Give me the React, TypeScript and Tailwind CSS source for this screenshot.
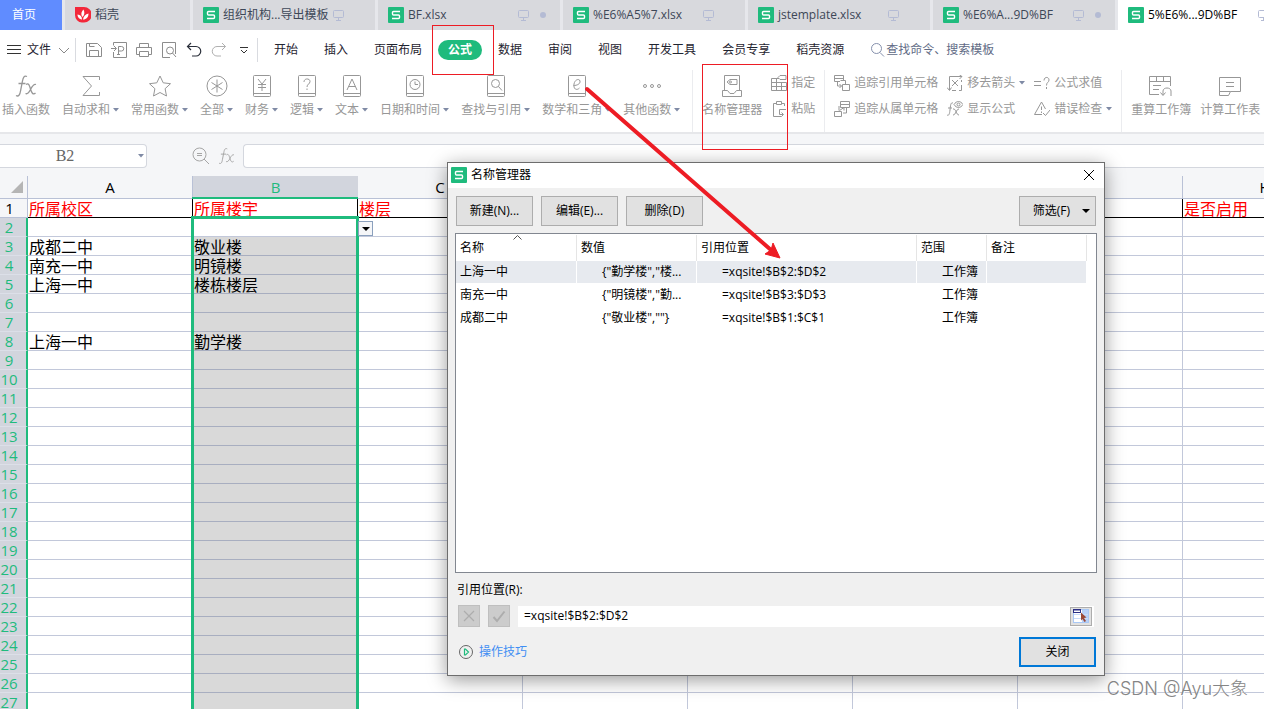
import type { ReactNode } from 'react'

// ── Data ───────────────────────────────────────────────────
const tabs = [
  { title: '组织机构...导出模板' },
  { title: 'BF.xlsx', dirty: true },
  { title: '%E6%A5%7.xlsx' },
  { title: 'jstemplate.xlsx' },
  { title: '%E6%A...9D%BF', dirty: true },
  { title: '5%E6%...9D%BF', active: true },
]

const menuLeft = ['开始', '插入', '页面布局']
const menuRight = ['数据', '审阅', '视图', '开发工具', '会员专享', '稻壳资源']

const columns = ['A', 'B', 'C', 'D', 'E', 'F', 'G', 'H']

const cells: Record<string, string> = {
  A1: '所属校区', B1: '所属楼宇', C1: '楼层', H1: '是否启用',
  A3: '成都二中', B3: '敬业楼',
  A4: '南充一中', B4: '明镜楼',
  A5: '上海一中', B5: '楼栋楼层',
  A8: '上海一中', B8: '勤学楼',
}

const rowNumbers = Array.from({ length: 27 }, (_, i) => i + 1)

const names = [
  { name: '上海一中', value: '{"勤学楼","楼...', ref: '=xqsite!$B$2:$D$2', scope: '工作簿' },
  { name: '南充一中', value: '{"明镜楼","勤...', ref: '=xqsite!$B$3:$D$3', scope: '工作簿' },
  { name: '成都二中', value: '{"敬业楼",""}', ref: '=xqsite!$B$1:$C$1', scope: '工作簿' },
]

// ── Icons ──────────────────────────────────────────────────
function Icon({ w = 16, h = 16, className, children }: { w?: number; h?: number; className?: string; children: ReactNode }) {
  return (
    <svg
      width={w}
      height={h}
      viewBox={`0 0 ${w} ${h}`}
      fill="none"
      stroke="currentColor"
      strokeWidth="1"
      className={`shrink-0 ${className ?? ''}`}
      aria-hidden="true"
    >
      {children}
    </svg>
  )
}

function SheetLogo() {
  return (
    <Icon>
      <rect width="16" height="16" rx="1" fill="#1fbb7d" stroke="none" />
      <path d="M12 4.5H5.5Q4.5 4.5 4.5 5.5V7Q4.5 8 5.5 8H10.5Q11.5 8 11.5 9V10.5Q11.5 11.5 10.5 11.5H4" stroke="#fff" strokeWidth="1.4" />
    </Icon>
  )
}

function Monitor() {
  return (
    <Icon w={12} h={12} className="text-[#b4bbd4]">
      <rect x="0.5" y="1.5" width="10" height="7" rx="1" />
      <path d="M5.5 8.5v3M3 11.5h5" />
    </Icon>
  )
}

function Caret({ className = 'text-[#7f8aa5]' }: { className?: string }) {
  return (
    <Icon w={6} h={4} className={className}>
      <path d="M0 0h6L3 3.5z" fill="currentColor" stroke="none" />
    </Icon>
  )
}

// Framed "book" used by the function categories
function Book({ children }: { children?: ReactNode }) {
  return (
    <Icon w={20} h={24}>
      <rect x="1.5" y="1.5" width="17" height="21" rx="1" />
      <path d="M1.5 19.5h17" />
      {children}
    </Icon>
  )
}

function FxIcon({ w = 22, h = 24 }: { w?: number; h?: number }) {
  return (
    <svg width={w} height={h} viewBox="0 0 22 24" fill="none" stroke="currentColor" strokeWidth="1.3" className="shrink-0" aria-hidden="true">
      <path d="M12 2.5C9 1 8 4 7.500 7L5.500 17C5 21 3.500 23 1 21.500M3.500 9.500h7" />
      <path d="M11 10.500c2.500-2 3.500 1 4.500 4.500s2.500 6.500 5 4M21 10.500c-2.500-1-4.500 3-5.500 5s-3 5-5 4" />
    </svg>
  )
}

// ── Ribbon pieces ──────────────────────────────────────────
function BigTool({ icon, label, menu = false }: { icon: ReactNode; label: string; menu?: boolean }) {
  return (
    <button className="flex shrink-0 flex-col items-center gap-1">
      {icon}
      <span className="flex items-center gap-[3px] whitespace-nowrap">
        {label}
        {menu && <Caret />}
      </span>
    </button>
  )
}

function SmallTool({ icon, label, menu = false }: { icon: ReactNode; label: string; menu?: boolean }) {
  return (
    <button className="flex h-[18px] items-center gap-1 whitespace-nowrap">
      {icon}
      {label}
      {menu && <Caret />}
    </button>
  )
}

function ToolPair({ children }: { children: ReactNode }) {
  return <div className="flex shrink-0 flex-col gap-2">{children}</div>
}

function Divider() {
  return <div className="-mt-1 w-px shrink-0 self-stretch bg-[#ebecef]" />
}

function TabStrip() {
  return (
    <nav className="flex h-[30px] shrink-0 gap-[3px] overflow-hidden bg-[#e6e7eb] text-[#3d4757]">
      <button className="w-[62px] shrink-0 bg-[#608cff] pr-3.5 text-white">首页</button>
      <button className="flex w-[125px] shrink-0 items-center gap-1 bg-[#d8d9dd] px-2.5">
        <Icon>
          <path d="M0 0H9A7.500 7.500 0 0 1 9 15.500H7A7.500 7.500 0 0 1 0 8z" fill="#f3283a" stroke="none" />
          <path d="M7 12.500C3.500 12 2.500 9.500 2.500 7.500 5.500 8 7 9.500 7 12.500zM7.500 10C5.500 7.500 6.500 4.500 8.500 2.500 10 5.500 9.500 8 7.500 10zM8 12.500C8.500 9 10.500 7 13.500 6.500 13.500 10 11.500 12.500 8 12.500z" fill="#fff" stroke="none" />
        </Icon>
        稻壳
      </button>
      {tabs.map(({ title, dirty, active }) => (
        <button
          key={title}
          className={`flex w-[182px] shrink-0 items-center gap-1 pl-2.5 ${active ? 'bg-white text-black' : 'bg-[#d8d9dd]'}`}
        >
          <SheetLogo />
          <span className="w-[106px] whitespace-nowrap text-left">{title}</span>
          <Monitor />
          {dirty && <span className="ml-1.5 size-1.5 rounded-full bg-[#b4bbd4]" />}
        </button>
      ))}
    </nav>
  )
}

function MenuBar() {
  return (
    <div className="flex h-[38px] shrink-0 items-center overflow-hidden pt-px whitespace-nowrap text-[#1f2430]">
      <button className="flex items-center gap-1.5 pl-[7px]">
        <Icon w={14} className="text-[#333]">
          <path d="M0 3.500h14M0 7.500h14M0 11.500h14" />
        </Icon>
        文件
        <Icon w={18} className="text-[#888]">
          <path d="M2 6l5 5 5-5" />
        </Icon>
      </button>
      <div className="h-6 w-px bg-[#d9dbe0]" />
      <div className="flex items-center gap-[9px] pr-[5px] pl-2.5 text-[#8c8c8c]">
        <button aria-label="保存">
          <Icon>
            <path d="M.5 1.500h11l4 4v9H.5zM3.500 14.500v-6h9v6M3.500 1.500v3h5" />
          </Icon>
        </button>
        <button aria-label="输出为PDF">
          <Icon>
            <path d="M2.500 3.500v-3h13v15h-13V10M0 6.500h5M3 4l2.500 2.500L3 9M7.500 12V4.500h3a2 2 0 0 1 0 4.500h-3M6 12.500h3" />
          </Icon>
        </button>
        <button aria-label="打印">
          <Icon>
            <path d="M3.500 5V1.500h9V5M3.500 12.500h-3v-7h15v7h-3M3.500 9.500h9v5h-9z" />
          </Icon>
        </button>
        <button aria-label="打印预览">
          <Icon>
            <path d="M9 15.500H1.500V.5h13V12" />
            <circle cx="9" cy="8.500" r="3.500" />
            <path d="M11.500 11l3.500 4" />
          </Icon>
        </button>
        <button aria-label="撤销" className="text-[#2a2f3a]">
          <Icon>
            <path d="M5 1L1.500 4.500 5 8M1.500 4.500H10a4.500 4.500 0 0 1 0 9.500H6" strokeWidth="1.200" />
          </Icon>
        </button>
        <button aria-label="恢复" className="text-[#b0b0b0]">
          <Icon>
            <path d="M11 1l3.500 3.500L11 8M14.500 4.500H6A4.500 4.500 0 0 0 6 14h4" />
          </Icon>
        </button>
        <button aria-label="自定义快速访问工具栏" className="text-[#333]">
          <Icon>
            <path d="M4 5.500h8M5 8l3 3 3-3" />
          </Icon>
        </button>
      </div>
      <div className="h-6 w-px bg-[#d9dbe0]" />
      <div className="flex items-center gap-[26px] pl-4">
        {menuLeft.map((m) => (
          <button key={m}>{m}</button>
        ))}
      </div>
      <button className="mx-4 h-5 w-11 rounded-full bg-[#1fbb7d] font-bold text-white">公式</button>
      <div className="flex items-center gap-[26px]">
        {menuRight.map((m) => (
          <button key={m}>{m}</button>
        ))}
        <button className="flex items-center text-[#5f6b85]">
          <Icon className="text-[#8590ac]">
            <circle cx="6.500" cy="6.500" r="5" />
            <path d="M10 10.500l4 4" />
          </Icon>
          查找命令、搜索模板
        </button>
      </div>
    </div>
  )
}

function Ribbon() {
  return (
    <div className="flex h-16 shrink-0 gap-3 overflow-hidden pt-1.5 pl-0.5 text-[#979797]">
      <BigTool icon={<FxIcon />} label="插入函数" />
      <BigTool
        icon={<Icon w={20} h={24}><path d="M18.500 6V2.500H2l8.500 9.500L2 21.500h16.500V18" /></Icon>}
        label="自动求和"
        menu
      />
      <BigTool
        icon={<Icon w={24} h={24}><path d="M12 2l3.200 6.800 7.300.9-5.400 5 1.400 7.300L12 18.500 5.500 22l1.400-7.300-5.400-5 7.300-.9z" /></Icon>}
        label="常用函数"
        menu
      />
      <BigTool
        icon={<Icon w={22} h={24}><circle cx="11" cy="12" r="10" /><path d="M11 5.500v13M5.500 8.500l11 7M5.500 15.500l11-7" /></Icon>}
        label="全部"
        menu
      />
      <BigTool icon={<Book><path d="M6 5l4 5 4-5M10 10v7M6 10.500h8M6 13.500h8" /></Book>} label="财务" menu />
      <BigTool icon={<Book><path d="M7 8c0-4 6-4 6-.5 0 2.500-3 2.500-3 5.500M10 14.500V16" /></Book>} label="逻辑" menu />
      <BigTool icon={<Book><path d="M5 16l5-11 5 11M6.500 12.500h7" /></Book>} label="文本" menu />
      <BigTool icon={<Book><circle cx="10" cy="10.500" r="5" /><path d="M10 7.500v3h3" /></Book>} label="日期和时间" menu />
      <BigTool icon={<Book><circle cx="9.500" cy="9.500" r="4" /><path d="M12.500 12.500l3.500 4" /></Book>} label="查找与引用" menu />
      <BigTool icon={<Book><path d="M6.500 11.500C10 11.500 13.500 10 13 7c-.5-2.500-5-2-6 3-.8 5 2.500 7 5.500 4" /></Book>} label="数学和三角" menu />
      <BigTool
        icon={<Icon w={20} h={24}><circle cx="3" cy="12" r="1.500" /><circle cx="10" cy="12" r="1.500" /><circle cx="17" cy="12" r="1.500" /></Icon>}
        label="其他函数"
        menu
      />
      <div className="flex shrink-0 gap-[9px]">
        <Divider />
        <BigTool
          icon={
            <Icon w={20} h={24}>
              <path d="M2.500 16.500v-15h15v15M.5 16.500h5l2.500 3h4l2.500-3h5v6H.5zM8 5.500h7v5H8L5 8z" />
              <circle cx="8.500" cy="8" r="1" />
            </Icon>
          }
          label="名称管理器"
        />
        <ToolPair>
          <SmallTool
            icon={<Icon><path d="M8 3.500H.5v12h15v-8M.5 7.500h15M.5 11.500h15M5.500 3.500v12M10.500 7.500v8M9 .5h6v4H9l-2-2z" /></Icon>}
            label="指定"
          />
          <SmallTool
            icon={<Icon><path d="M5 2.500H2.500v13h8M11 2.500h2.500V5M5.500.5h5v3h-5zM15 8.500H8.500v5H12M10.500 11.500l2 2-2 2" /></Icon>}
            label="粘贴"
          />
        </ToolPair>
        <Divider />
        <ToolPair>
          <SmallTool
            icon={<Icon><path d="M9.500 5V.5h-9v6H6M.5 3.500h9M3.500 6.500V11h4M5.500 9L7.500 11l-2 2M6.500 5.500h5v4M8.500 9.500h7v6h-7z" /></Icon>}
            label="追踪引用单元格"
          />
          <SmallTool
            icon={<Icon><path d="M6.500.500h9v6h-9zM6.500 3.500h9M.5 10.500h7v5h-7zM12.500 6.500V12H9M5 9.500V5M5.500 9.500L10 6.500M7 6.500h3v3" /></Icon>}
            label="追踪从属单元格"
          />
        </ToolPair>
        <ToolPair>
          <SmallTool
            icon={<Icon><path d="M2.500 15V1.500H15M12.500 0L15 1.500 12.500 4M0 12.500l2.500 3 2-3M5 5l6 6M11 5l-6 6M14.500 5v2M14.500 10v5.500H12M5 15.500h4" /></Icon>}
            label="移去箭头"
            menu
          />
          <SmallTool
            icon={<Icon><path d="M6 2C3.500 1 3.500 5 3 9s-1 6-3 5M1 7h4M6 8c3-1 3 6 6 6M12 8c-3 0-3 6-6 6M7 3.500c2.500-4 6.500-4 9 0-2.500 4-6.500 4-9 0z" /><circle cx="11.500" cy="3.500" r="1.500" /></Icon>}
            label="显示公式"
          />
        </ToolPair>
        <ToolPair>
          <SmallTool
            icon={<Icon><path d="M0 6.500h7M0 10.500h7M10 5.500c0-4 5-4 5-.5 0 2.500-2.500 2-2.500 5.500M12.500 12v2" /></Icon>}
            label="公式求值"
          />
          <SmallTool
            icon={<Icon><path d="M8 13.500H.5L7.500 1l4 7M7.500 5.500V9M7.500 10.500V12M9 12l2.500 2.500L16 9" /></Icon>}
            label="错误检查"
            menu
          />
        </ToolPair>
        <Divider />
        <BigTool
          icon={<Icon w={24} h={24}><path d="M10 20.500H.5v-18h21V12M.5 7.500h21M7.500 2.500v5M14.500 2.500v5M4 11.500h8M4 15.500h6M14 21v-4c0-4 8-4 8 0v5M11.500 18.500l2.500 3 2.500-3" /></Icon>}
          label="重算工作簿"
        />
        <BigTool
          icon={<Icon w={24} h={24}><path d="M1.500 3.500h21v14h-10l-2 4h-9zM1.500 17.500h11M8 8.500h8M8 12.500h8" /></Icon>}
          label="计算工作表"
        />
      </div>
    </div>
  )
}

function FormulaBar() {
  return (
    <div className="flex h-11 shrink-0 items-center border-t-2 border-[#e6e7ea] bg-[#f5f6f8] pt-0.5">
      <div className="flex h-6 w-[147px] shrink-0 items-center rounded-r-sm border border-l-0 border-[#d4d7de] bg-white pr-0.5">
        <input
          aria-label="名称框"
          defaultValue="B2"
          className="w-full min-w-0 bg-transparent pr-2 text-center font-['Liberation_Serif',serif] text-base text-[#666] outline-none"
        />
        <button aria-label="展开名称框">
          <Caret />
        </button>
      </div>
      <div className="flex w-24 shrink-0 items-center justify-end gap-2 pr-2 text-[#a6a6a6]">
        <Icon w={18} h={18}>
          <circle cx="7.500" cy="7.500" r="6.500" />
          <path d="M12 12l5 5M5 6.500h5M5 8.500h5" />
        </Icon>
        <FxIcon w={17} h={18} />
      </div>
      <input
        aria-label="编辑栏"
        className="h-6 min-w-0 flex-1 rounded-l-sm border border-r-0 border-[#d4d7de] bg-white outline-none"
      />
    </div>
  )
}

// ── Worksheet ──────────────────────────────────────────────
function cellClass(col: string, row: number) {
  if (row === 1) return 'border-black bg-white text-[#f00]'
  if (col === 'B') return row === 2 ? 'border-[#c2c8da] bg-white' : 'border-[#a8aec0] bg-[#d9d9d9]'
  return 'border-[#c2c8da] bg-white'
}

function Sheet() {
  return (
    <div className="relative min-h-0 flex-1 overflow-hidden">
      <table className="w-[1348px] table-fixed border-separate border-spacing-0">
        <colgroup>
          <col className="w-7" />
          {columns.map((c) => (
            <col key={c} className="w-[165px]" />
          ))}
        </colgroup>
        <thead>
          <tr className="h-[23px] text-[15px] leading-[22px]">
            <th className="border-r border-b border-[#b9c1d6] bg-[#f5f6f8] p-0">
              <Icon w={14} h={14} className="ml-2.5 text-[#b5b5b5]">
                <path d="M13 1v12H1z" fill="currentColor" stroke="none" />
              </Icon>
            </th>
            {columns.map((c) => (
              <th
                key={c}
                className={`border-b p-0 font-normal ${
                  c === 'B' ? 'border-[#1fbb7d] bg-[#d2d5dd] text-[#1fbb7d]' : 'border-r border-[#b9c1d6] bg-[#f5f6f8]'
                }`}
              >
                {c}
              </th>
            ))}
          </tr>
        </thead>
        <tbody>
          {rowNumbers.map((n) => (
            <tr key={n} className="h-[19px] leading-[18px]">
              <th
                className={`border-b p-0 pr-2 text-[15px] font-normal ${
                  n === 1
                    ? 'border-r border-r-[#b9c1d6] border-b-[#b9c1d6] bg-[#f5f6f8]'
                    : 'border-r-2 border-r-[#1fbb7d] border-b-[#dcdfe8] bg-[#d2d5dd] text-[#1fbb7d]'
                }`}
              >
                {n}
              </th>
              {columns.map((c) => (
                <td
                  key={c}
                  className={`border-r border-b p-0 pt-0.5 pl-px text-base leading-4 whitespace-nowrap ${cellClass(c, n)}`}
                >
                  {cells[c + n]}
                </td>
              ))}
            </tr>
          ))}
        </tbody>
      </table>

      {/* Column B selection frame */}
      <div className="pointer-events-none absolute top-[21px] left-[192px] h-0.5 w-[166px] bg-[#1fbb7d]" />
      <div className="pointer-events-none absolute top-10 -bottom-1 left-[191px] w-[168px] border-[3px] border-[#1fbb7d]" />

      {/* Validation drop-down of the active cell */}
      <button
        aria-label="下拉列表"
        className="absolute top-[45px] left-[358px] flex size-[15px] items-center justify-center border border-[#8ba0bd] bg-[#f5f6f8]"
      >
        <Icon w={8} h={4} className="text-black">
          <path d="M0 0h8L4 4z" fill="currentColor" stroke="none" />
        </Icon>
      </button>
    </div>
  )
}

// ── Name manager dialog ────────────────────────────────────
function DialogButton({ children, className = '' }: { children: ReactNode; className?: string }) {
  return (
    <button className={`h-[30px] w-[77px] border border-[#adadad] bg-[#e1e1e1] ${className}`}>{children}</button>
  )
}

function NameManager() {
  const head = 'border-r border-[#e5e5e5] p-0 pl-1 text-left font-normal'
  const cell = 'border-r border-b border-white p-0 pl-[25px]'
  return (
    <section
      role="dialog"
      aria-labelledby="dialog-title"
      className="absolute top-[162px] left-[447px] flex w-[658px] flex-col border border-[#6d6d6d] bg-[#f0f0f0] text-black shadow-[0_4px_18px_rgba(0,0,0,0.4)]"
    >
      <header className="flex h-[25px] items-center gap-1 bg-white pr-2 pb-px pl-[3px]">
        <SheetLogo />
        <h2 id="dialog-title" className="flex-1">名称管理器</h2>
        <button aria-label="关闭窗口">
          <Icon w={14} h={14}>
            <path d="M2 2l10 10M12 2L2 12" />
          </Icon>
        </button>
      </header>

      <div className="flex flex-col px-2 pt-2 pb-2">
        <div className="flex gap-2">
          <DialogButton>新建(N)...</DialogButton>
          <DialogButton>编辑(E)...</DialogButton>
          <DialogButton>删除(D)</DialogButton>
          <DialogButton className="ml-auto flex items-center justify-end gap-3 pr-[5px]">
            筛选(F)
            <Icon w={8} h={4}>
              <path d="M0 0h8L4 4z" fill="currentColor" stroke="none" />
            </Icon>
          </DialogButton>
        </div>

        <div className="relative -mx-px mt-[7px] h-[340px] border border-[#828790] bg-white pt-px">
          <table className="w-[631px] table-fixed border-separate border-spacing-0 whitespace-nowrap">
            <colgroup>
              <col className="w-[121px]" />
              <col className="w-[120px]" />
              <col className="w-[220px]" />
              <col className="w-[70px]" />
              <col className="w-[100px]" />
            </colgroup>
            <thead>
              <tr className="h-[26px]">
                <th className={head}>名称</th>
                <th className={head}>数值</th>
                <th className={head}>引用位置</th>
                <th className={head}>范围</th>
                <th className={head}>备注</th>
              </tr>
            </thead>
            <tbody>
              {names.map((n, i) => (
                <tr key={n.name} className={`h-[23px] ${i === 0 ? 'bg-[#e7eaef]' : ''}`}>
                  <td className="border-r border-b border-white p-0 pl-1">{n.name}</td>
                  <td className={cell}>{n.value}</td>
                  <td className={cell}>{n.ref}</td>
                  <td className={cell}>{n.scope}</td>
                  <td className={cell} />
                </tr>
              ))}
            </tbody>
          </table>
          {/* Sort marker on the first column */}
          <Icon w={9} h={5} className="absolute top-px left-[57px] text-[#555]">
            <path d="M.5 4.500l4-4 4 4" />
          </Icon>
        </div>

        <label htmlFor="refers-to" className="mt-[9px] pl-px">引用位置(R):</label>
        <div className="mt-[7px] flex items-center gap-2 px-0.5">
          <button disabled aria-label="取消" className="flex size-[22px] items-center justify-center border border-[#bfbfbf] bg-[#ccc] text-[#adadad]">
            <Icon w={14} h={14}>
              <path d="M2 2l10 10M12 2L2 12" strokeWidth="1.200" />
            </Icon>
          </button>
          <button disabled aria-label="确认" className="flex size-[22px] items-center justify-center border border-[#bfbfbf] bg-[#ccc] text-[#adadad]">
            <Icon w={14} h={14}>
              <path d="M1.500 8L5 12 12.500 2.500" strokeWidth="2" />
            </Icon>
          </button>
          <div className="flex h-[21px] flex-1 items-center bg-white pr-0.5">
            <input id="refers-to" defaultValue="=xqsite!$B$2:$D$2" className="min-w-0 flex-1 bg-transparent pl-1.5 outline-none" />
            <button aria-label="选择区域" className="flex h-[19px] w-[22px] items-center justify-center border border-[#adadad] bg-[#e1e1e1]">
              <Icon w={16} h={14}>
                <rect x=".5" y=".5" width="15" height="13" fill="#fff" stroke="#a9c8f5" />
                <path d="M9 1h6v12H9z" fill="#b7d0f8" stroke="none" />
                <path d="M1 5.500h14M1 9.500h14" stroke="#c8dcf8" />
                <rect x=".5" y=".5" width="7" height="3" fill="#fff" stroke="#2c3186" />
                <path d="M0 1h7" stroke="#2c3186" />
                <path d="M8 3.500l5.500 5-2.500.5 2 3-1.500 1-2-3L8 11.500z" fill="#9b4a38" stroke="none" />
              </Icon>
            </button>
          </div>
        </div>

        <div className="mt-2.5 flex items-center justify-between">
          <a href="#tips" className="flex items-center gap-[5px] pl-0.5 text-[#3f8ef3]">
            <Icon className="text-[#666]">
              <circle cx="8" cy="8" r="6.500" />
              <path d="M6.500 5v6h1l3-3-3-3z" stroke="#1fbb7d" strokeWidth="1.200" />
            </Icon>
            操作技巧
          </a>
          <button className="h-[30px] w-[77px] border-2 border-[#0078d7] bg-[#e1e1e1]">关闭</button>
        </div>
      </div>
    </section>
  )
}

export default function App() {
  return (
    <div className="relative flex h-screen flex-col overflow-hidden bg-white font-['Open_Sans','Noto_Sans_CJK_SC',sans-serif] text-xs">
      <TabStrip />
      <MenuBar />
      <Ribbon />
      <FormulaBar />
      <Sheet />
      <NameManager />

      {/* ── Annotations ─────────────────────────────────── */}
      <div className="pointer-events-none absolute top-[25px] left-[432px] h-[50px] w-[62px] border border-[#ed1c24]" />
      <div className="pointer-events-none absolute top-16 left-[702px] h-[86px] w-[86px] border border-[#ed1c24]" />
      <svg width="200" height="176" viewBox="0 0 200 176" className="pointer-events-none absolute top-[85px] left-[583px]" aria-hidden="true">
        <path d="M4 4L188 165" stroke="#ed1c24" strokeWidth="4" strokeLinecap="round" />
        <path d="M197 173l-15-4 6-4 2-7z" fill="#ed1c24" stroke="#ed1c24" />
      </svg>
      <p className="pointer-events-none absolute right-4 bottom-1.5 font-['Inter','Noto_Sans_CJK_SC',sans-serif] text-lg font-light text-[#858585] [text-shadow:1px_1px_0_#fff]">
        CSDN @Ayu大象
      </p>
    </div>
  )
}
